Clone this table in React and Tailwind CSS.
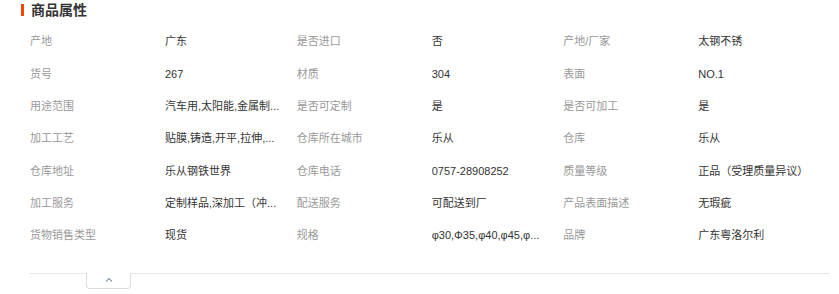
import React from 'react';

const rows = [
  [['产地', '广东'], ['是否进口', '否'], ['产地/厂家', '太钢不锈']],
  [['货号', '267'], ['材质', '304'], ['表面', 'NO.1']],
  [['用途范围', '汽车用,太阳能,金属制...'], ['是否可定制', '是'], ['是否可加工', '是']],
  [['加工工艺', '贴膜,铸造,开平,拉伸,...'], ['仓库所在城市', '乐从'], ['仓库', '乐从']],
  [['仓库地址', '乐从钢铁世界'], ['仓库电话', '0757-28908252'], ['质量等级', '正品（受理质量异议）']],
  [['加工服务', '定制样品,深加工（冲...'], ['配送服务', '可配送到厂'], ['产品表面描述', '无瑕疵']],
  [['货物销售类型', '现货'], ['规格', 'φ30,Φ35,φ40,φ45,φ...'], ['品牌', '广东粤洛尔利']],
];

export default function App() {
  return (
    <div
      className="w-[839px] h-[294px] bg-white overflow-hidden"
      style={{ fontFamily: '"Liberation Sans", "Noto Sans CJK SC", sans-serif' }}
    >
      {/* title */}
      <div className="flex items-center h-[20px] pl-[21px]">
        <span className="w-[3px] h-[12px] bg-[#ff4400]"></span>
        <h2 className="ml-[7px] text-[14px] leading-[20px] font-bold text-[#333]">商品属性</h2>
      </div>

      {/* attributes */}
      <div className="ml-[30px] mt-[5.5px] w-[800px] text-[11px]">
        {rows.map((row, i) => (
          <div
            key={i}
            className="grid grid-cols-[135px_131.67px_135px_131.67px_135px_131.66px] h-[32.33px] items-center"
          >
            {row.map(([label, value]) => (
              <React.Fragment key={label}>
                <span className="text-[#999] truncate">{label}</span>
                <span className="text-[#333] truncate pr-[10px]">{value}</span>
              </React.Fragment>
            ))}
          </div>
        ))}
      </div>

      {/* fold bar */}
      <div className="ml-[30px] mt-[21px] w-[799px] border-t border-[#e5e5e5] relative">
        <button className="absolute left-[56px] -top-px w-[45px] h-[16px] bg-white border border-t-0 border-[#dddddd] rounded-b-[4px] flex items-center justify-center">
          <svg width="8" height="5" viewBox="0 0 8 5" className="-mt-[2px]">
            <path d="M1 4.5 L4 1.5 L7 4.5" fill="none" stroke="#8a9bb0" strokeWidth="1.1" />
          </svg>
        </button>
      </div>
    </div>
  );
}
